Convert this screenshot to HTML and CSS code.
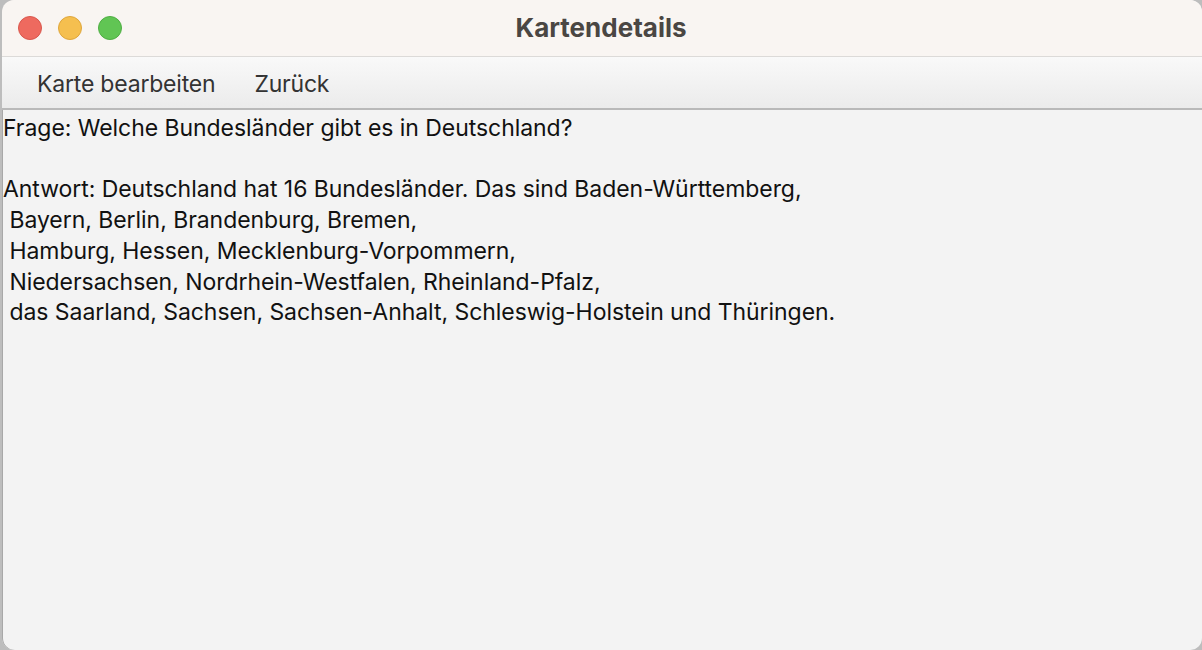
FILE: index.html
```html
<!DOCTYPE html>
<html lang="de">
<head>
<meta charset="utf-8">
<title>Kartendetails</title>
<link rel="stylesheet" href="styles.css">
</head>
<body>
<div class="desktop">
  <div class="window">
    <div class="titlebar">
      <div class="lights">
        <span class="light red"></span>
        <span class="light yellow"></span>
        <span class="light green"></span>
      </div>
      <div class="title">Kartendetails</div>
    </div>
    <div class="menubar">
      <span class="menu-item">Karte bearbeiten</span>
      <span class="menu-item">Zurück</span>
    </div>
    <div class="content"><pre class="text">Frage: Welche Bundesländer gibt es in Deutschland?

Antwort: Deutschland hat 16 Bundesländer. Das sind Baden-Württemberg,
 Bayern, Berlin, Brandenburg, Bremen,
 Hamburg, Hessen, Mecklenburg-Vorpommern,
 Niedersachsen, Nordrhein-Westfalen, Rheinland-Pfalz,
 das Saarland, Sachsen, Sachsen-Anhalt, Schleswig-Holstein und Thüringen.</pre></div>
  </div>
</div>
</body>
</html>
```

FILE: styles.css
```css
html, body {
  margin: 0;
  padding: 0;
  width: 1202px;
  height: 650px;
  overflow: hidden;
  background: #c9c9c9;
}
.desktop {
  width: 1202px;
  height: 650px;
  display: flex;
  padding-left: 2px;
  box-sizing: border-box;
  background: #bdbdbd;
}
.window {
  flex: 1;
  display: flex;
  flex-direction: column;
  border-radius: 12px;
  overflow: hidden;
  background: #f3f3f3;
  box-shadow: inset 1px 0 0 #a8a8a8;
}
.titlebar {
  position: relative;
  height: 56px;
  flex: none;
  background: #f9f5f2;
  border-bottom: 1px solid #dcdad8;
  display: flex;
  align-items: center;
}
.lights {
  display: flex;
  gap: 16px;
  padding-left: 16px;
}
.light {
  width: 24px;
  height: 24px;
  border-radius: 50%;
  box-sizing: border-box;
}
.red { background: #ee6a5f; border: 1px solid #d9574d; }
.yellow { background: #f5bf4f; border: 1px solid #dfa63c; }
.green { background: #61c554; border: 1px solid #4fae43; }
.title {
  position: absolute;
  left: 0;
  right: 0;
  top: 0;
  bottom: 2px;
  display: flex;
  align-items: center;
  justify-content: center;
  padding-right: 2px;
  font-family: Inter, "Liberation Sans", sans-serif;
  font-weight: 700;
  font-size: 26px;
  color: #4a4643;
  pointer-events: none;
}
.menubar {
  height: 53px;
  flex: none;
  background: linear-gradient(#f9f9f9, #ebebeb);
  border-bottom: 2px solid #b9b9b9;
  display: flex;
  align-items: center;
  gap: 39px;
  padding-left: 35px;
  padding-top: 2px;
  box-sizing: border-box;
}
.menu-item {
  font-family: Inter, "Liberation Sans", sans-serif;
  font-size: 23px;
  color: #333333;
  letter-spacing: -0.2px;
}
.content {
  flex: 1;
  padding: 3px 0 0 1px;
}
.text {
  margin: 0;
  font-family: Inter, "Liberation Sans", sans-serif;
  font-size: 23px;
  line-height: 30.7px;
  color: #111111;
  letter-spacing: -0.05px;
  white-space: pre;
}
```
